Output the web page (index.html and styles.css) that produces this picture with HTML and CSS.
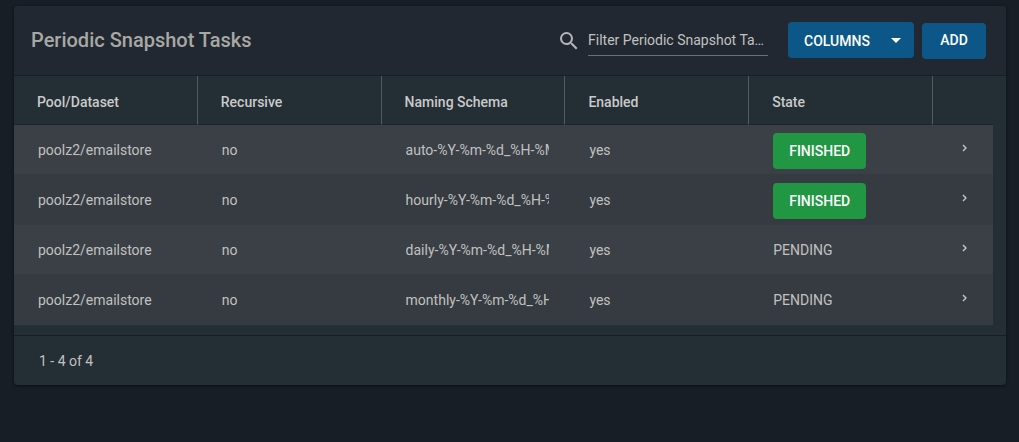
FILE: index.html
```html
<!DOCTYPE html>
<html lang="en">
<head>
<meta charset="utf-8">
<title>Periodic Snapshot Tasks</title>
<link rel="stylesheet" href="styles.css">
</head>
<body>
<main class="card">
  <header class="toolbar">
    <h1 class="title">Periodic Snapshot Tasks</h1>
    <div class="search">
      <label for="filter" aria-label="Filter">
        <svg class="search-icon" viewBox="0 0 24 24" aria-hidden="true"><path d="M15.5 14h-.79l-.28-.27A6.47 6.47 0 0 0 16 9.5 6.5 6.5 0 1 0 9.5 16c1.61 0 3.09-.59 4.23-1.57l.27.28v.79l5 4.99L20.490 19l-4.990-5zm-6 0C7.010 14 5 11.990 5 9.500S7.010 5 9.500 5 14 7.010 14 9.500 11.990 14 9.500 14z"/></svg>
      </label>
      <input class="filter" id="filter" type="text" placeholder="Filter Periodic Snapshot Tasks">
    </div>
    <div class="actions">
      <button class="btn btn-columns" type="button">COLUMNS
        <svg class="caret" viewBox="0 0 10 5" aria-hidden="true"><path d="M0 0h10L5 5z"/></svg>
      </button>
      <button class="btn btn-add" type="button">ADD</button>
    </div>
  </header>
  <div class="table-area">
    <table class="tasks">
      <colgroup><col><col><col><col><col><col class="col-expand"></colgroup>
      <thead>
        <tr><th>Pool/Dataset</th><th>Recursive</th><th>Naming Schema</th><th>Enabled</th><th>State</th><th></th></tr>
      </thead>
      <tbody>
        <tr><td>poolz2/emailstore</td><td>no</td><td><div class="clip">auto-%Y-%m-%d_%H-%M</div></td><td>yes</td><td><button class="btn state" type="button">FINISHED</button></td><td><button class="expand" type="button" aria-label="Expand"><svg class="chevron" viewBox="0 0 5 8" aria-hidden="true"><path d="M1 1l3 3-3 3"/></svg></button></td></tr>
        <tr><td>poolz2/emailstore</td><td>no</td><td><div class="clip">hourly-%Y-%m-%d_%H-%M</div></td><td>yes</td><td><button class="btn state" type="button">FINISHED</button></td><td><button class="expand" type="button" aria-label="Expand"><svg class="chevron" viewBox="0 0 5 8" aria-hidden="true"><path d="M1 1l3 3-3 3"/></svg></button></td></tr>
        <tr><td>poolz2/emailstore</td><td>no</td><td><div class="clip">daily-%Y-%m-%d_%H-%M</div></td><td>yes</td><td>PENDING</td><td><button class="expand" type="button" aria-label="Expand"><svg class="chevron" viewBox="0 0 5 8" aria-hidden="true"><path d="M1 1l3 3-3 3"/></svg></button></td></tr>
        <tr><td>poolz2/emailstore</td><td>no</td><td><div class="clip">monthly-%Y-%m-%d_%H-%M</div></td><td>yes</td><td>PENDING</td><td><button class="expand" type="button" aria-label="Expand"><svg class="chevron" viewBox="0 0 5 8" aria-hidden="true"><path d="M1 1l3 3-3 3"/></svg></button></td></tr>
      </tbody>
    </table>
  </div>
  <footer class="footer">1 - 4 of 4</footer>
</main>
</body>
</html>
```

FILE: styles.css
```css
* { box-sizing: border-box; }

body {
  margin: 0;
  padding: 6px 13px 24px 14px;
  background: #181e26;
  color: #c1c1c1;
  font: 14px/20px Roboto, sans-serif;
}

.card {
  background: #242e35;
  border-radius: 4px;
  box-shadow: 0 1px 3px #0c1016;
}

.toolbar {
  display: flex;
  align-items: center;
  padding: 0 20px 0 17px;
  min-height: 70px;
  background: #212831;
  border-bottom: 1px solid #181e26;
  border-radius: 4px 4px 0 0;
}

.title {
  flex: 1;
  margin: 0;
  padding-bottom: 2px;
  color: #a8a8a5;
  font-size: 20px;
  font-weight: 500;
  line-height: 24px;
}

.search {
  display: flex;
  align-items: center;
  gap: 7px;
  margin-right: 20px;
}

.search-icon {
  display: block;
  width: 24px;
  height: 24px;
  fill: #b5b5b5;
}

.filter {
  width: 180px;
  height: 30px;
  padding: 0 0 1px;
  border: 0;
  border-bottom: 1px solid #6a7077;
  background: none;
  color: #c1c1c1;
  font: inherit;
  text-overflow: ellipsis;
}

.filter::placeholder { color: #c1c1c1; opacity: 1; }

.actions {
  display: flex;
  align-items: center;
  gap: 8px;
}

.btn {
  height: 36px;
  padding: 0 16px;
  border: 0;
  border-radius: 4px;
  background: #0d5788;
  color: #fff;
  font: 500 14px/20px Roboto, sans-serif;
}

.btn-columns {
  display: flex;
  align-items: center;
  justify-content: space-between;
  width: 126px;
  margin-bottom: 2px;
  padding: 2px 13px 0 16px;
}

.btn-add {
  width: 64px;
  padding-bottom: 2px;
}

.caret {
  width: 10px;
  height: 5px;
  fill: #fff;
}

.table-area {
  padding: 0 13px 10px 0;
  border-bottom: 1px solid #181e26;
}

.tasks {
  width: 100%;
  border-collapse: separate;
  border-spacing: 0;
  table-layout: fixed;
}

.col-expand { width: 60px; }

th {
  height: 49px;
  padding: 4px 16px 0 23px;
  border-right: 1px solid #525b62;
  border-bottom: 1px solid #1d242b;
  color: #cacaca;
  font-weight: 500;
  text-align: left;
}

th:last-child { border-right: 0; }

td {
  height: 50px;
  padding: 0 16px 0 24px;
  border-bottom: 1px solid #343b41;
}

tbody tr:nth-child(odd) { background: #3a4045; }
tbody tr:nth-child(even) { background: #353b40; }

.clip {
  overflow: hidden;
  white-space: nowrap;
}

.state {
  display: block;
  margin-top: 2px;
  background: #219643;
}

.expand {
  display: block;
  padding: 0 5px 4px;
  border: 0;
  background: none;
}

.chevron {
  display: block;
  width: 5px;
  height: 8px;
  fill: none;
  stroke: #c1c1c1;
  stroke-width: 1.5;
}

.footer {
  padding: 15px 25px 14px;
}
```
